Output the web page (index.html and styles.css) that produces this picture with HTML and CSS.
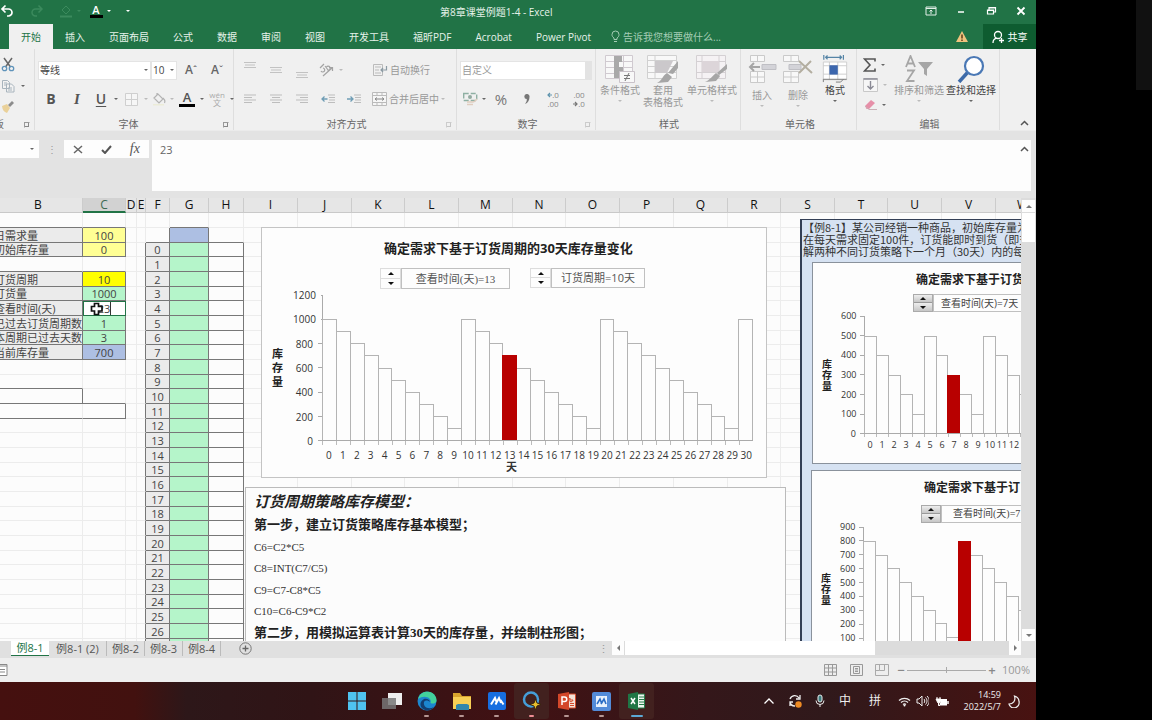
FILE: index.html
```html
<!DOCTYPE html>
<html lang="zh-CN">
<head>
<meta charset="utf-8">
<title>第8章课堂例题1-4 - Excel</title>
<link rel="stylesheet" href="styles.css">
</head>
<body>
<div class="screen">
<main class="app">
  <header class="titlebar">
    <div class="quick">
      <button class="q q-undo" aria-label="撤消"><svg width="14" height="14" viewBox="0 0 14 14"><path d="M2.500 5h6a3.500 3.500 0 0 1 0 7H7M5.500 1.500L2 5l3.500 3.500" fill="none" stroke="#fff" stroke-width="1.700"/></svg></button>
      <button class="q q-redo" aria-label="恢复"><svg width="14" height="14" viewBox="0 0 14 14"><path d="M11.500 5h-6a3.500 3.500 0 0 0 0 7H7M8.500 1.500L12 5 8.500 8.500" fill="none" stroke="#3b8a5d" stroke-width="1.500"/></svg></button>
      <button class="q q-fill" aria-label="填充颜色"><svg width="14" height="14" viewBox="0 0 14 14"><path d="M3 6l4-4 4 4-4 4z" fill="none" stroke="#3b8a5d"/><path d="M1 11.500h12v2H1z" fill="#3b8a5d"/></svg></button>
      <i class="caret dim-green"></i>
      <button class="q q-font" aria-label="字体颜色"><span class="font-a">A</span></button>
      <i class="caret white"></i>
      <button class="q q-more" aria-label="自定义快速访问工具栏"><i class="caret white"></i></button>
    </div>
    <h1>第8章课堂例题1-4 - Excel</h1>
    <div class="window-buttons">
      <button aria-label="功能区显示选项"><svg width="12" height="12" viewBox="0 0 12 12"><path d="M1 2h10v8H1zM1 3.500h10M6 9V5M4.500 6.500L6 5l1.500 1.500" fill="none" stroke="#e3f0e8"/></svg></button>
      <button aria-label="最小化"><svg width="12" height="12" viewBox="0 0 12 12"><path d="M3 7h6" stroke="#fff" stroke-width="1.500"/></svg></button>
      <button aria-label="还原"><svg width="12" height="12" viewBox="0 0 12 12"><path d="M2.500 5h6v4h-6zM4 5V2.500h6.500V7h-2M4 3h6M2.500 5.500h6" fill="none" stroke="#fff" stroke-width="1.200"/></svg></button>
      <button aria-label="关闭"><svg width="12" height="12" viewBox="0 0 12 12"><path d="M2.500 2.500l7 7M9.500 2.500l-7 7" stroke="#fff" stroke-width="1.800"/></svg></button>
    </div>
  </header>

  <nav class="tabs">
    <button class="tab active">开始</button><button class="tab">插入</button><button class="tab">页面布局</button><button class="tab">公式</button><button class="tab">数据</button><button class="tab">审阅</button><button class="tab">视图</button><button class="tab">开发工具</button><button class="tab">福昕PDF</button><button class="tab">Acrobat</button><button class="tab">Power Pivot</button>
    <button class="tell-me"><svg width="9" height="13" viewBox="0 0 9 13"><path d="M3 9.500V8C1.500 7 1 6 1 4.500a3.500 3.500 0 0 1 7 0C8 6 7.500 7 6 8v1.500zM3 11.500h3" fill="none" stroke="#a5cdb5"/></svg>告诉我您想要做什么...</button>
    <div class="tabs-right">
      <svg width="12" height="11" viewBox="0 0 12 11"><path d="M6 0l6 11H0z" fill="#efc37e"/><path d="M6 3.500v4M6 8.500V10" stroke="#5d3b17" stroke-width="1.500"/></svg>
      <button class="share"><svg width="13" height="14" viewBox="0 0 13 14"><circle cx="6" cy="5" r="3.500" fill="none" stroke="#fff" stroke-width="1.300"/><path d="M1 13c0-3 1.500-4.500 4-4.800M7 10.500h5M9.500 8v5" fill="none" stroke="#fff" stroke-width="1.300"/></svg>共享</button>
    </div>
  </nav>

  <section class="ribbon">
    <div class="group g-clip">
      <div class="clip-tools">
        <button aria-label="剪切"><svg width="14" height="15" viewBox="0 0 14 15"><path d="M3 1l6.500 9M11 1L4.500 10" stroke="#666" stroke-width="1.500"/><circle cx="3.500" cy="11.500" r="2.200" fill="none" stroke="#5f93ba" stroke-width="1.300"/><circle cx="10.500" cy="11.500" r="2.200" fill="none" stroke="#5f93ba" stroke-width="1.300"/></svg></button>
        <button aria-label="复制"><svg width="14" height="14" viewBox="0 0 14 14"><path d="M1.500 1.500h5l2 2v6h-7zM5.500 5h5l2.500 2.500V13H5.500zM3 4h3M3 6h2M7 9h4M7 11h4" fill="#f2f2f2" stroke="#a8b4bd"/></svg><i class="caret"></i></button>
        <button aria-label="格式刷"><svg width="14" height="13" viewBox="0 0 14 13"><path d="M1 6l5-2 3 4-3 5c-3-1-4.500-3-5-7z" fill="#ead19a"/><path d="M7 5l4-4 2 2-4 4z" fill="#8c8c8c"/></svg></button>
      </div>
      <div class="group-name"><span>剪贴板</span><button class="launch" aria-label="剪贴板设置"></button></div>
    </div>

    <div class="group g-font">
      <div class="row">
        <label class="combo c-font"><select aria-label="字体"><option>等线</option></select></label>
        <label class="combo c-size"><select aria-label="字号"><option>10</option></select></label>
        <button class="tool aa" aria-label="增大字号">A<sup>ˆ</sup></button>
        <button class="tool aa" aria-label="减小字号">A<sup>ˇ</sup></button>
      </div>
      <div class="row">
        <button class="tool b" aria-label="加粗">B</button>
        <button class="tool i" aria-label="倾斜">I</button>
        <button class="tool t22 u" aria-label="下划线">U</button><i class="caret"></i>
        <button class="tool t22" aria-label="边框"><svg width="13" height="13" viewBox="0 0 13 13"><path d="M.5.5h12v12H.5zM6.500.5v12M.5 6.500h12" fill="#f6f6f6" stroke="#cfcfcf"/></svg></button><i class="caret pale"></i>
        <button class="tool t18" aria-label="填充"><svg width="14" height="14" viewBox="0 0 14 14"><path d="M2 6l4-4 5 5-4 4zM5 4V1M11 6c2 2 2 4 1.500 5" fill="none" stroke="#b3b3b3" stroke-width="1.200"/><path d="M1 12h11v1.500H1z" fill="#ececd8"/></svg></button><i class="caret pale"></i>
        <button class="tool t22" aria-label="字体颜色"><span class="font-a dark">A</span></button><i class="caret"></i>
        <button class="tool t22 wen" aria-label="拼音"><span>wén</span><span>文</span></button><i class="caret"></i>
      </div>
      <div class="group-name"><span>字体</span><button class="launch" aria-label="字体设置"></button></div>
    </div>

    <div class="group g-align">
      <div class="row">
        <button class="tool up" aria-label="顶端对齐"><svg width="12" height="8" viewBox="0 0 12 8"><path d="M0 1.500h12M1 4h10M0 6.500h12" stroke="#c2c2c2"/></svg></button>
        <button class="tool" aria-label="垂直居中"><svg width="12" height="8" viewBox="0 0 12 8"><path d="M0 1.500h12M1 4h10M0 6.500h12" stroke="#c2c2c2"/></svg></button>
        <button class="tool down" aria-label="底端对齐"><svg width="12" height="8" viewBox="0 0 12 8"><path d="M0 1.500h12M1 4h10M0 6.500h12" stroke="#c2c2c2"/></svg></button>
        <button class="tool t22" aria-label="方向"><svg width="15" height="14" viewBox="0 0 15 14"><path d="M1 5l4-4M2 8a2 2 0 1 0 2-3M6 3l3 4M7.500 4a2 2 0 1 1 1 3M4 13l9-8M10 4.500h3.500V8" fill="none" stroke="#a3a3a3" stroke-width="1.200"/></svg></button><i class="caret pale"></i>
        <button class="text-tool first"><svg width="15" height="12" viewBox="0 0 15 12"><path d="M.5.5h9v11h-9zM2 3h6M2 6h4M2 9h6" fill="none" stroke="#bbb"/><path d="M13.500 2v4H8M10 4L8 6l2 2" fill="none" stroke="#8b9aa3" stroke-width="1.200"/></svg>自动换行</button>
      </div>
      <div class="row">
        <button class="tool" aria-label="左对齐"><svg width="12" height="10" viewBox="0 0 12 10"><path d="M0 1h12M0 3.500h8M0 6h12M0 8.500h8" stroke="#bdbdbd"/></svg></button>
        <button class="tool" aria-label="居中"><svg width="12" height="10" viewBox="0 0 12 10"><path d="M0 1h12M2 3.500h8M0 6h12M2 8.500h8" stroke="#bdbdbd"/></svg></button>
        <button class="tool" aria-label="右对齐"><svg width="12" height="10" viewBox="0 0 12 10"><path d="M0 1h12M4 3.500h8M0 6h12M4 8.500h8" stroke="#bdbdbd"/></svg></button>
        <button class="tool" aria-label="减少缩进"><svg width="14" height="10" viewBox="0 0 14 10"><path d="M7 1h7M8 3.500h6M8 6h6M7 8.500h7" stroke="#bdbdbd"/><path d="M6.500 5H1M3.500 2.500L1 5l2.500 2.500" fill="none" stroke="#6f9db5" stroke-width="1.300"/></svg></button>
        <button class="tool" aria-label="增加缩进"><svg width="14" height="10" viewBox="0 0 14 10"><path d="M7 1h7M8 3.500h6M8 6h6M7 8.500h7" stroke="#bdbdbd"/><path d="M0 5h6M3.500 2.500L6 5 3.500 7.500" fill="none" stroke="#6f9db5" stroke-width="1.300"/></svg></button>
        <button class="text-tool"><svg width="15" height="14" viewBox="0 0 15 14"><path d="M.5.5h14v13H.5zM.5 3.500h14M.5 10.500h14M5 .5v3M10 .5v3M5 10.500v3M10 10.500v3" fill="#f6f6f6" stroke="#bbb"/><path d="M3 7h9M5 5.500L3 7l2 1.500M10 5.500L12 7l-2 1.500" fill="none" stroke="#888"/></svg>合并后居中</button><i class="caret pale"></i>
      </div>
      <div class="group-name"><span>对齐方式</span><button class="launch pale" aria-label="对齐设置"></button></div>
    </div>

    <div class="group g-number">
      <div class="row">
        <label class="combo c-num"><select aria-label="数字格式"><option>自定义</option></select></label>
      </div>
      <div class="row">
        <button class="tool t20" aria-label="会计格式"><svg width="15" height="14" viewBox="0 0 15 14"><path d="M.7 1.500h13v7H.7z" fill="none" stroke="#8fb0a3" stroke-dasharray="5 2" stroke-width="1.400"/><circle cx="7" cy="5" r="2" fill="#93aaa0"/><path d="M4 10h6c2 0 3-2 4-3M4 12.500h6" stroke="#e0cdbf" stroke-width="1.500" fill="none"/></svg></button><i class="caret"></i>
        <button class="tool pct" aria-label="百分比">%</button>
        <button class="tool comma" aria-label="千位分隔"><svg width="6" height="10" viewBox="0 0 6 10"><path d="M3 0a2.500 2.500 0 0 1 2.500 3C5.500 6 4 9 1 10c1.500-2 2-3.500 1.700-5A2.500 2.500 0 1 1 3 0z" fill="#777"/></svg></button>
        <button class="tool dec" aria-label="增加小数位数"><span><svg width="5" height="6" viewBox="0 0 5 6"><path d="M5 3H1M3 1L1 3l2 2" fill="none" stroke="#5e93ad" stroke-width="1.200"/></svg>.0</span><span>.00</span></button>
        <button class="tool dec" aria-label="减少小数位数"><span>.00</span><span><svg width="5" height="6" viewBox="0 0 5 6"><path d="M0 3h4M2 1l2 2-2 2" fill="none" stroke="#777" stroke-width="1.200"/></svg>.0</span></button>
      </div>
      <div class="group-name"><span>数字</span><button class="launch pale" aria-label="数字设置"></button></div>
    </div>

    <div class="group g-style">
      <div class="big-row">
        <button class="big w44"><svg width="30" height="28" viewBox="0 0 30 28"><path d="M.5.5h27v23H.5zM.5 6.500h27M.5 12.500h27M.5 18.500h27M9.500.5v23M18.500.5v23" fill="#f8f8f8" stroke="#d0cad0"/><path d="M9 1h8v6h-3v5h4v5h-3v6H9z" fill="#a9a9a9"/><path d="M14.500 16.500h15v11h-15z" fill="#f8f8f8" stroke="#c9c2c9"/><path d="M19 20.500h6M19 23.500h6M24 18l-4 8" stroke="#777"/></svg><span>条件格式</span><i class="caret pale"></i></button>
        <button class="big w42"><svg width="32" height="28" viewBox="0 0 32 28"><path d="M.5.5h29v23H.5zM.5 5.500h29M.5 11.500h29M.5 17.500h29M8 .5v23" fill="#f8f8f8" stroke="#d0d0d0"/><path d="M8 6h18l-6 12H8z" fill="#cbc8cb"/><path d="M31 6v7l-5 6-5-1zM20 18l5 4-4 5-11 1c5-2 5-7 10-10z" fill="#a6a6a6"/></svg><span>套用<br>表格格式</span></button>
        <button class="big w56"><svg width="32" height="28" viewBox="0 0 32 28"><path d="M.5.5h29v23H.5zM.5 6.500h29M.5 17.500h29M6 .5v23M23 .5v23" fill="#f5f2f4" stroke="#d4d0d3"/><path d="M6 6h17v11H6z" fill="#dcd5d9"/><path d="M31 9v5l-8 6-2-2zM20 18l4 3-4 5-11 1c5-2 7-6 11-9z" fill="#a6a6a6"/></svg><span>单元格样式</span><i class="caret pale"></i></button>
      </div>
      <div class="group-name"><span>样式</span></div>
    </div>

    <div class="group g-cell">
      <div class="big-row">
        <button class="big w36 low"><svg width="29" height="28" viewBox="0 0 29 28"><path d="M2.500.5h14v6h-14zM9.500.5v6M2.500 16.500h14v11h-14zM9.500 16.500v11M2.500 22h14" fill="#f8f8f8" stroke="#cacaca"/><path d="M14 9.500h14v5H14z" fill="#d3d3d8" stroke="#bfbfc4"/><path d="M12 12H2M6 8l-4 4 4 4" fill="none" stroke="#a6a6a6" stroke-width="2"/></svg><span>插入</span><i class="caret pale"></i></button>
        <button class="big w36 low"><svg width="30" height="28" viewBox="0 0 30 28"><path d="M.5.500h15v6H.5zM8 .5v6M.5 16.500h15v11H.5zM8 16.500v11M.5 22h15" fill="#f8f8f8" stroke="#cacaca"/><path d="M6 9.500h12v5H6z" fill="#d3d3d8" stroke="#bfbfc4"/><path d="M16 6l13 12M28 6L16 18" stroke="#b3aea0" stroke-width="2"/></svg><span>删除</span><i class="caret pale"></i></button>
        <button class="big w38 on"><svg width="26" height="30" viewBox="0 0 26 30"><path d="M1 0v5M22 0v5M3 2.500h17M5 .5l-2 2 2 2M18 .5l2 2-2 2" fill="none" stroke="#5584a6" stroke-width="1.300"/><path d="M.5 7.500h25v19H.5zM7 7.500v19M16 7.500v19M.5 11.500h25M.5 20.500h25" fill="#fff" stroke="#ccc"/><path d="M7 11h9v10H7z" fill="#3c66ad"/><path d="M.5 29v-3h25M14 29h5l3-3" fill="none" stroke="#777"/></svg><span>格式</span><i class="caret"></i></button>
      </div>
      <div class="group-name"><span>单元格</span></div>
    </div>

    <div class="group g-edit">
      <div class="big-row">
        <div class="edit-small">
          <button aria-label="自动求和"><svg width="13" height="14" viewBox="0 0 13 14"><path d="M12 3.500V1H1.500l5.500 6-5.500 6H12v-2.500" fill="none" stroke="#555" stroke-width="1.600"/></svg><i class="caret"></i></button>
          <button aria-label="填充"><svg width="15" height="14" viewBox="0 0 15 14"><path d="M.5.500h14v13H.5z" fill="#f6f6f6" stroke="#c8c8c8"/><path d="M.5 1h14M7.500 3v8M4.500 8l3 3 3-3" fill="none" stroke="#8a8a95" stroke-width="1.400"/></svg><i class="caret pale"></i></button>
          <button aria-label="清除"><svg width="14" height="12" viewBox="0 0 14 12"><path d="M2 7l6-6 4 3-6 6H3.500z" fill="#e68fa8"/><path d="M2 7l4 3.500h8" fill="none" stroke="#c9b0b6"/></svg><i class="caret"></i></button>
        </div>
        <button class="big w52"><svg width="28" height="28" viewBox="0 0 28 28"><path d="M1 12L5.500 1 10 12M2.500 8.500h6M2 15.500h7L2 26h7.500" fill="none" stroke="#a6a6a6" stroke-width="1.800"/><path d="M13 7h15l-6 7v7l-3-2v-5z" fill="#a6a6a6"/></svg><span>排序和筛选</span><i class="caret pale"></i></button>
        <button class="big w52 on"><svg width="28" height="28" viewBox="0 0 28 28"><path d="M11 17L2 27" stroke="#3d6aa8" stroke-width="3.500"/><circle cx="17" cy="11" r="9" fill="#fff" stroke="#4a78b5" stroke-width="2.200"/></svg><span>查找和选择</span><i class="caret"></i></button>
      </div>
      <div class="group-name"><span>编辑</span></div>
    </div>
    <button class="collapse" aria-label="折叠功能区"><svg width="9" height="6" viewBox="0 0 9 6"><path d="M1 5l3.500-3.500L8 5" fill="none" stroke="#555" stroke-width="1.500"/></svg></button>
  </section>

  <section class="formula">
    <div class="namebox"><button aria-label="名称框"><i class="caret"></i></button></div>
    <span class="grip">⋮</span>
    <div class="fx">
      <button aria-label="取消"><svg width="10" height="9" viewBox="0 0 10 9"><path d="M1 1l8 7M9 1L1 8" stroke="#666" stroke-width="1.500"/></svg></button>
      <button aria-label="输入"><svg width="11" height="9" viewBox="0 0 11 9"><path d="M1 5l3 3 6-7" fill="none" stroke="#555" stroke-width="2"/></svg></button>
      <button class="fx-name" aria-label="插入函数">fx</button>
    </div>
    <div class="fbox"><textarea aria-label="编辑栏" rows="1">23</textarea>
      <button aria-label="折叠编辑栏"><svg width="9" height="6" viewBox="0 0 9 6"><path d="M1 5l3.500-3.500L8 5" fill="none" stroke="#555" stroke-width="1.500"/></svg></button></div>
  </section>

  <section class="sheet">
    <div class="canvas">
      <table class="grid" id="grid"></table>
      <svg class="cursor" width="14" height="14" viewBox="0 0 14 14"><path d="M4.500 1.500h4v3h3.500v4.500H8.500v3.500h-4V9H1.500V4.500h3z" fill="#fff" stroke="#111" stroke-width="1.700"/></svg>

      <article class="chart main">
        <h2>确定需求下基于订货周期的30天库存量变化</h2>
        <div class="controls">
          <span class="spin"><button class="up-arrow" aria-label="增加时间"></button><button class="down-arrow" aria-label="减少时间"></button></span><span class="linked serif">查看时间(天)=13</span>
          <span class="spin second"><button class="up-arrow" aria-label="增加周期"></button><button class="down-arrow" aria-label="减少周期"></button></span><span class="linked">订货周期=10天</span>
        </div>
        <div class="plot" data-max="1200" data-step="200" data-top="1000" data-unit="100" data-count="31" data-hit="13" data-labels="31"></div>
        <div class="x-title">天</div>
      </article>

      <article class="notes">
        <h2>订货周期策略库存模型：</h2>
        <h3>第一步，建立订货策略库存基本模型；</h3>
        <p>C6=C2*C5</p>
        <p>C8=INT(C7/C5)</p>
        <p>C9=C7-C8*C5</p>
        <p>C10=C6-C9*C2</p>
        <h3>第二步，用模拟运算表计算30天的库存量，并绘制柱形图；</h3>
      </article>

      <div class="example">
        <p>【例8-1】某公司经销一种商品，初始库存量为0<br>在每天需求固定100件，订货能即时到货（即交<br>解两种不同订货策略下一个月（30天）内的每天</p>
        <article class="chart small">
          <h2>确定需求下基于订货</h2>
          <div class="controls">
            <span class="spin raised"><button class="up-arrow" aria-label="增加时间"></button><button class="down-arrow" aria-label="减少时间"></button></span><span class="linked">查看时间(天)=7天</span>
          </div>
          <div class="plot" data-max="600" data-step="100" data-top="500" data-unit="100" data-count="14" data-hit="7" data-labels="13"></div>
        </article>
        <article class="chart small third">
          <h2>确定需求下基于订</h2>
          <div class="controls">
            <span class="spin raised"><button class="up-arrow" aria-label="增加时间"></button><button class="down-arrow" aria-label="减少时间"></button></span><span class="linked serif">查看时间(天)=7</span>
          </div>
          <div class="plot" data-max="900" data-step="100" data-top="800" data-unit="100" data-count="14" data-hit="8" data-labels="0"></div>
        </article>
      </div>
    </div>
    <div class="vscroll"><button class="up-arrow" aria-label="向上滚动"></button><span class="thumb"></span><button class="end down-arrow" aria-label="向下滚动"></button></div>
  </section>

  <footer class="sheet-tabs">
    <button class="st active">例8-1</button><button class="st wide">例8-1 (2)</button><button class="st">例8-2</button><button class="st">例8-3</button><button class="st">例8-4</button>
    <button class="add" aria-label="新工作表"><svg width="13" height="13" viewBox="0 0 13 13"><circle cx="6.500" cy="6.500" r="5.700" fill="none" stroke="#777"/><path d="M3.500 6.500h6M6.500 3.500v6" stroke="#666" stroke-width="1.300"/></svg></button>
    <span class="dots">⋮</span>
    <div class="hscroll"><button class="left-arrow" aria-label="向左滚动"></button><span class="thumb"></span><button class="end right-arrow" aria-label="向右滚动"></button></div>
  </footer>

  <section class="status">
    <svg width="8" height="12" viewBox="0 0 8 12"><path d="M-2 .5h9v11h-9" fill="#fff" stroke="#888"/><path d="M0 2h7M0 5.500h5M0 8h5" stroke="#888"/></svg>
    <div class="views">
      <button aria-label="普通"><svg width="13" height="12" viewBox="0 0 13 12"><path d="M.5.500h12v11H.5zM4.500.5v11M8.500.5v11M.5 4h12M.5 8h12" fill="none" stroke="#999"/></svg></button>
      <button aria-label="页面布局"><svg width="13" height="12" viewBox="0 0 13 12"><path d="M.5.500h12v11H.5zM3.500 2.500h6v7h-6zM5 4.500h3M5 6h3M5 7.500h3" fill="none" stroke="#999"/></svg></button>
      <button aria-label="分页预览"><svg width="14" height="12" viewBox="0 0 14 12"><path d="M.5.500h13v11H.5zM4.500.5v6h5v-6M.5 6.500h4" fill="none" stroke="#aaa"/></svg></button>
    </div>
    <span class="zoom-sign">−</span><input type="range" aria-label="缩放" min="0" max="200" value="100"><span class="zoom-sign">+</span>
    <span class="zoom-value">100%</span>
  </section>

  <nav class="taskbar">
    <div class="apps">
      <button aria-label="开始菜单"><svg width="18" height="18" viewBox="0 0 18 18"><path d="M0 0h8.500v8.500H0zM9.500 0H18v8.500H9.500zM0 9.500h8.500V18H0zM9.500 9.500H18V18H9.500z" fill="#4fc3f0"/></svg></button>
      <button aria-label="任务视图"><svg width="20" height="18" viewBox="0 0 20 18"><path d="M6 1h14v12H6z" fill="#eee"/><path d="M0 6h14v11H0z" fill="#777" opacity=".85"/></svg></button>
      <button class="run" aria-label="Edge"><svg width="20" height="20" viewBox="0 0 20 20"><circle cx="10" cy="10" r="9.500" fill="#1c86cf"/><path d="M1 8C3 1 9 0 13 1c4 1 7 5 6.500 9-1 3-4 3-6 2 2-5-6-9-12.500-4z" fill="#43d19b"/><path d="M7 11c-1 5 4 8 10 5-3 4-8 4-11 2-4-3-3-8 1-10 3-1 6 1 6 3-2-2-5-2-6 0z" fill="#123f72"/></svg></button>
      <button class="run" aria-label="文件资源管理器"><svg width="20" height="18" viewBox="0 0 20 18"><path d="M1 1h7l2 3h9v13H1z" fill="#d9a42d"/><path d="M1 5h18v12H1z" fill="#f7cf55"/><path d="M4 18v-5l2-1h9l2 1v5z" fill="#3287ac"/></svg></button>
      <button class="run" aria-label="腾讯会议"><svg width="18" height="18" viewBox="0 0 18 18"><rect width="18" height="18" rx="2" fill="#176ee0"/><path d="M3 12.500L7 6l2 5M7.500 12.500L11 6l2 5M12.500 8l3 4.500" fill="none" stroke="#fff" stroke-width="2"/></svg></button>
      <button class="run hot" aria-label="浏览器"><svg width="20" height="20" viewBox="0 0 20 20"><circle cx="9" cy="8.500" r="7" fill="none" stroke="#459ed8" stroke-width="2.500"/><path d="M13.500 8l1.500 4 4 1.500-4 1.500-1.500 4-1.500-4-4-1.500 4-1.500z" fill="#e6bd2d" stroke="#392510"/></svg></button>
      <button class="run" aria-label="PowerPoint"><svg width="18" height="18" viewBox="0 0 18 18"><path d="M9 2h8.500v14H9z" fill="#f2e1d8" stroke="#d24a2b"/><path d="M0 2l11-2v18L0 16z" fill="#d4472a"/><path d="M4 13V5h2.500a2 2 0 0 1 0 4.500H4" fill="none" stroke="#fff" stroke-width="1.500"/><path d="M12 6a2 2 0 1 0 3 2h-3zM12 11.500h4M12 13.500h4" stroke="#d24a2b" fill="none"/></svg></button>
      <button class="run" aria-label="会议"><svg width="19" height="19" viewBox="0 0 19 19"><rect width="19" height="19" rx="2" fill="#538bd8"/><rect x="4" y="4" width="11" height="11" fill="#e8f1fc"/><path d="M5 12l3-5 1.500 4M9 12l3-5 2 5" fill="none" stroke="#296cc5" stroke-width="1.600"/></svg></button>
      <button class="run current" aria-label="Excel"><svg width="17" height="18" viewBox="0 0 17 18"><path d="M8 2h8.500v14H8z" fill="#edf6ef" stroke="#267c49"/><path d="M11 5h5M11 7.500h5M11 10h5M11 12.500h5" stroke="#267c49"/><path d="M0 2l10-2v18L0 16z" fill="#1f7645"/><path d="M3 6l4 6M7 6l-4 6" stroke="#fff" stroke-width="1.500"/></svg></button>
    </div>
    <div class="tray">
      <svg class="t1" width="12" height="8" viewBox="0 0 12 8"><path d="M1.500 6.500L6 2l4.500 4.500" fill="none" stroke="#fff" stroke-width="1.300"/></svg>
      <svg class="t2" width="14" height="14" viewBox="0 0 14 14"><path d="M2 5a5 5 0 0 1 9-1M12 1v4H8M7 12a5 5 0 0 1-5-4M2 12V8h3" fill="none" stroke="#eee" stroke-width="1.300"/><circle cx="10.500" cy="10.500" r="3.200" fill="#ee8b24"/></svg>
      <svg class="t3" width="10" height="14" viewBox="0 0 10 14"><rect x="3" y="1" width="4" height="7" rx="2" fill="#3d7d80" stroke="#e7eeee"/><path d="M1 6.500a4 4 0 0 0 8 0M5 10.500V13" fill="none" stroke="#eee"/></svg>
      <span class="t4">中</span><span class="t5">拼</span>
      <svg class="t6" width="13" height="11" viewBox="0 0 13 11"><path d="M1 4.500a8 8 0 0 1 11 0M3 6.500a5 5 0 0 1 7 0M5 8.500a2.500 2.500 0 0 1 3 0" fill="none" stroke="#eee" stroke-width="1.300"/><circle cx="6.500" cy="9.500" r="1" fill="#fff"/></svg>
      <svg class="t7" width="13" height="12" viewBox="0 0 13 12"><path d="M1 4h2l3-3v10L3 8H1zM8 4c1 1 1 3 0 4M9.500 2.500c2 2 2 5 0 7M11 1c3 3 3 7 0 10" fill="none" stroke="#eee"/></svg>
      <svg class="t8" width="14" height="11" viewBox="0 0 14 11"><path d="M2 1v2M5 1v2M1 3h5v2a2 2 0 0 1-4 0zM3.500 7v2.500H5" stroke="#fff" fill="#fff"/><path d="M6 3h6v6.500H5V7h1z" fill="#fff"/><path d="M13 5v3" stroke="#fff" stroke-width="1.500"/></svg>
      <div class="clock"><time>14:59</time><time>2022/5/7</time></div>
      <svg class="t9" width="12" height="13" viewBox="0 0 12 13"><path d="M6.500 1c3 1 4.500 3 4.500 5.500a5 5 0 0 1-10 2.500c4 0 7-3 5.500-8z" fill="none" stroke="#eee" stroke-width="1.200"/></svg>
    </div>
  </nav>
</main>
<aside class="side"><div class="side-tile"></div></aside>
</div>
<script src="sheet.js"></script>
</body>
</html>
```

FILE: styles.css
```css
* { box-sizing: border-box; }
body { margin: 0; background: #000; color: #444; font: 10px/14px "Open Sans", "Noto Sans CJK SC", sans-serif; }
button, select, textarea, input { font: inherit; color: inherit; margin: 0; padding: 0; border: 0; background: none; border-radius: 0; }
button { display: inline-flex; align-items: center; justify-content: center; white-space: nowrap; }
svg { display: block; flex: none; }
h1, h2, h3, p { margin: 0; font-weight: normal; }
.screen { display: grid; grid-template-columns: minmax(0, 1fr) 116px; height: 100vh; overflow: hidden; }
.app { display: flex; flex-direction: column; min-width: 0; min-height: 0; background: #e4e4e4; }
.side { background: #000; }
.side-tile { width: 16px; height: 90px; margin-left: auto; background: #111; }

.caret { flex: none; display: inline-flex; width: 8px; justify-content: center; }
.caret::after { content: ""; border: 2px solid transparent; border-top-color: #666; border-bottom: 0; }
.caret.pale::after { border-top-color: #bbb; }
.caret.white::after { border-top-color: #fff; }
.caret.dim-green::after { border-top-color: #3b8a5d; }
.up-arrow::after, .down-arrow::after, .left-arrow::after, .right-arrow::after { content: ""; border: 3px solid transparent; }
.up-arrow::after { border-bottom-color: currentColor; border-top: 0; }
.down-arrow::after { border-top-color: currentColor; border-bottom: 0; }
.left-arrow::after { border-right-color: currentColor; border-left: 0; }
.right-arrow::after { border-left-color: currentColor; border-right: 0; }

/* title bar and ribbon tabs */
.titlebar { display: flex; height: 24px; background: #217346; color: #e6f2ea; }
.quick { display: flex; align-items: center; width: 440px; height: 22px; }
.q { height: 20px; }
.q-undo { width: 14px; }
.q-redo { width: 14px; margin-left: 16px; }
.q-fill { width: 14px; margin-left: 15px; }
.quick .dim-green { margin-left: 2px; }
.q-font { width: 14px; margin-left: 6px; }
.quick > .white { margin-left: 2px; }
.q-more { margin-left: 11px; }
.font-a { width: 13px; height: 13px; border-bottom: 3px solid #000; font-weight: 600; font-size: 11px; line-height: 10px; text-align: center; color: #fff; }
.font-a.dark { width: 16px; height: 16px; color: #555; font-size: 13px; line-height: 12px; }
.titlebar h1 { flex: 1; font-size: 10px; line-height: 24px; white-space: nowrap; }
.window-buttons { display: flex; height: 22px; }
.window-buttons button { width: 30px; }
.tabs { display: flex; height: 25px; background: #217346; color: #e6f2ea; padding-left: 9px; }
.tab { padding: 0 12px; }
.tab.active { background: #f0f0f0; color: #217346; }
.tell-me { gap: 3px; margin-left: 8px; color: #a5cdb5; }
.tabs-right { display: flex; align-items: center; gap: 15px; margin-left: auto; }
.share { height: 25px; width: 53px; gap: 3px; background: #0e5c30; color: #fff; }

/* ribbon */
.ribbon { display: flex; height: 82px; background: #f0f0f0; border-bottom: 1px solid #ebebeb; }
.group { display: flex; flex-direction: column; flex: none; padding: 8px 0 0 3px; border-right: 1px solid #dedede; }
.g-clip { width: 35px; padding: 5px 0 0; }
.g-font { width: 199px; }
.g-align { width: 223px; }
.g-number { width: 139px; }
.g-style { width: 145px; padding: 6px 0 0 2px; }
.g-cell { width: 116px; padding: 6px 0 0 3px; }
.g-edit { width: 143px; padding: 6px 0 0 3px; }
.row { display: flex; align-items: center; height: 26px; margin-bottom: 3px; }
.group-name { display: flex; justify-content: center; align-items: center; position: relative; height: 14px; margin-top: auto; margin-bottom: -1px; color: #666; }
.g-font .group-name { padding-right: 14px; }
.g-clip .group-name { justify-content: flex-start; }
.g-clip .group-name span { width: 4px; direction: rtl; overflow: hidden; white-space: nowrap; }
.launch { position: absolute; right: 4px; bottom: 3px; width: 6px; height: 6px; border: 1px solid #999; border-right-color: transparent; border-bottom-color: transparent; }
.launch::after { content: ""; width: 3px; height: 3px; border: 1px solid #888; border-left: 0; border-top: 0; }
.launch.pale { opacity: .4; }
.clip-tools { display: flex; flex-direction: column; }
.clip-tools button { height: 21px; gap: 4px; justify-content: flex-start; margin-left: 1px; }
.combo { display: flex; align-items: center; height: 19px; background: #fff; position: relative; border: 1px solid #e4e4e4; }
.combo select { appearance: none; width: 100%; height: 17px; padding-left: 1px; line-height: 17px; }
.combo::after { content: ""; position: absolute; right: 2px; border: 2px solid transparent; border-top-color: #666; border-bottom: 0; }
.c-font { width: 113px; }
.c-size { width: 26px; margin-right: 1px; }
.c-num { width: 132px; border-right: 7px solid #e3e3e3; color: #999; }
.combo.c-num::after { display: none; }
.tool { flex: none; width: 26px; height: 24px; }
.t22 { width: 22px; }
.t20 { width: 20px; }
.t18 { width: 18px; }
.tool.up { align-items: flex-start; padding-top: 3px; }
.tool.down { align-items: flex-end; padding-bottom: 3px; }
.aa { font-size: 12px; font-weight: 600; color: #666; }
.aa sup { font-size: 9px; line-height: 6px; }
.b, .i, .u { font-size: 14px; font-weight: 700; color: #555; }
.i { font-family: "Liberation Serif", serif; font-style: italic; font-size: 15px; }
.u { text-decoration: underline; font-weight: 600; text-underline-offset: 2px; }
.wen { flex-direction: column; color: #aaa; font-size: 8px; line-height: 8px; }
.text-tool { color: #999; gap: 2px; margin-left: 5px; }
.text-tool.first { margin-left: 28px; }
.pct { font-size: 15px; color: #777; }
.dec { flex-direction: column; align-items: center; font-size: 8px; line-height: 9px; color: #888; }
.dec span { display: flex; align-items: center; }
.big-row { display: flex; align-items: flex-start; }
.big { flex-direction: column; color: #999; line-height: 12px; gap: 1px; }
.big svg { height: 28px; }
.big.low span { margin-top: 5px; }
.big.on { color: #444; }
.w36 { width: 36px; }
.w38 { width: 38px; }
.w42 { width: 42px; }
.w44 { width: 44px; }
.w52 { width: 52px; }
.w56 { width: 56px; }
.big .caret { height: 8px; align-items: center; }
.edit-small { display: flex; flex-direction: column; width: 33px; }
.edit-small button { height: 20px; justify-content: flex-start; gap: 3px; padding-left: 3px; }
.collapse { align-self: flex-end; margin-left: auto; width: 24px; height: 14px; }

/* formula bar */
.formula { display: flex; align-items: flex-start; padding: 9px 5px 7px 0; background: #e3e3e3; }
.namebox { display: flex; justify-content: flex-end; width: 39px; height: 18px; background: #fdfdfd; }
.namebox button { width: 14px; }
.grip { width: 25px; text-align: center; color: #999; line-height: 18px; }
.fx { display: flex; width: 85px; height: 18px; background: #fdfdfd; }
.fx button { flex: 1; }
.fx .fx-name { font: italic 14px/16px "Liberation Serif", serif; color: #555; }
.fbox { display: flex; flex: 1; align-items: flex-start; height: 51px; margin-left: 3px; background: #fdfdfd; }
.fbox textarea { flex: 1; height: 50px; padding: 1px 8px; resize: none; font-size: 11px; line-height: 17px; color: #666; outline: 0; }
.fbox button { width: 13px; height: 18px; }

/* worksheet */
.sheet { display: grid; grid-template-columns: minmax(0, 1fr) 15px; flex: 1; min-height: 0; }
.canvas { position: relative; overflow: hidden; background: #fcfcfc; }
.grid { table-layout: fixed; width: 1056px; margin-left: -6px; border-collapse: separate; border-spacing: 0; font: 11px/13px "Open Sans", "Noto Sans CJK SC", sans-serif; color: #444; }
.grid th, .grid td { height: 15px; padding: 0; border-right: 1px solid #ececec; border-bottom: 1px solid #ececec; text-align: center; white-space: nowrap; overflow: hidden; }
.grid tr:nth-child(3n) td { height: 14px; line-height: 12px; }
.grid th { height: 15px; background: #e6e6e6; border-right-color: #ccc; border-bottom-color: #c9c9c9; font-weight: 400; font-size: 12px; line-height: 14px; color: #111; }
.grid th.sel { background: #d2d2d2; border-bottom: 2px solid #217346; line-height: 13px; color: #3d6a52; }
.grid .name { background: #ebebeb; text-align: left; }
.grid .name, .grid .box { border-right-color: #777; border-bottom-color: #777; }
.grid .edge-r { border-right-color: #777; }
.grid .edge-b { border-bottom-color: #777; }
.grid .pale-yellow { background: #ffff94; }
.grid .yellow { background: #ff0; }
.grid .green { background: #b5f5ca; }
.grid .blue { background: #adbfe3; }
.grid .index { background: #ebebeb; }
.grid td.editing { background: #fff; border: 1px solid #217346; }
.caret-line { border-right: 1px solid #333; }
.cursor { position: absolute; left: 90px; top: 104px; }

/* drawing objects placed on the sheet */
.chart { background: #fdfdfd; border: 1px solid #c4c4c4; color: #333; }
.chart h2 { font-weight: 700; color: #222; white-space: nowrap; line-height: 16px; }
.controls { display: flex; white-space: nowrap; }
.spin { display: grid; grid-template-rows: 1fr 1fr; width: 21px; border: 1px solid #ddd; }
.spin button { min-height: 0; color: #111; border-bottom: 1px solid #ddd; }
.spin button:last-child { border-bottom: 0; }
.spin.raised { border-color: #aaa; }
.spin.raised button { background: linear-gradient(#eee, #c6c6c6); border-color: #999; }
.linked { display: grid; place-items: center; border: 1px solid #c0c0c0; font-size: 11px; line-height: 14px; color: #555; }
.serif { font-family: "Liberation Serif", "Noto Sans CJK SC", serif; }
.plot { display: grid; grid-template-columns: 31px 29px minmax(0, 1fr); grid-template-rows: 146px auto; }
.y-title { display: flex; flex-direction: column; align-self: center; justify-self: center; font-size: 11px; font-weight: 700; line-height: 14px; color: #222; }
.y-labels { display: flex; flex-direction: column; justify-content: space-between; margin: -6px 0; line-height: 12px; }
.y-labels span { display: flex; align-items: center; justify-content: flex-end; gap: 5px; height: 12px; }
.y-labels span::after { content: ""; width: 4px; height: 1px; background: #aaa; }
.bars { display: flex; align-items: flex-end; border-left: 1px solid #aaa; border-bottom: 1px solid #aaa; }
.bars i { flex: 1; margin: 0 0 0 -1px; border: 1px solid #b4b4b4; border-bottom: 0; }
.bars .hit { position: relative; background: #b80000; border-color: #b80000; }
.x-labels { grid-column: 3; display: flex; line-height: 12px; }
.x-labels span { flex: 1 1 0; min-width: 0; display: flex; flex-direction: column; align-items: center; white-space: nowrap; }
.x-labels span::before { content: ""; align-self: stretch; height: 4px; margin-bottom: 4px; border-left: 1px solid #bbb; }
.main { position: absolute; left: 261px; top: 29px; width: 506px; height: 251px; padding: 12px 13px 0 0; }
.main h2 { font-size: 13px; padding-left: 122px; }
.main .controls { height: 21px; margin: 12px 0 6px; padding-left: 118px; }
.main .linked { width: 109px; }
.main .linked:last-child { width: 94px; height: 20px; }
.main .second { margin-left: 20px; height: 20px; }
.x-title { padding-left: 8px; text-align: center; font-size: 11px; font-weight: 700; line-height: 12px; }
.notes { position: absolute; left: 245px; top: 289px; width: 541px; height: 200px; padding: 5px 8px; background: #fcfcfc; border: 1px solid #bbb; color: #222; white-space: nowrap; font-family: "Liberation Serif", "Noto Sans CJK SC", serif; }
.notes h2 { font-size: 15px; line-height: 18px; font-weight: 700; font-style: italic; padding-bottom: 3px; }
.notes h3 { font-size: 13px; line-height: 22px; font-weight: 700; }
.notes p { font-size: 11px; line-height: 22px; color: #333; margin-bottom: -1px; }
.notes p:nth-of-type(2n) { margin-bottom: 0; }
.example { position: absolute; left: 800px; top: 21px; right: -14px; bottom: -24px; padding-left: 10px; background: #d6e2f2; border: 1px solid #333f55; border-left-width: 2px; overflow: hidden; }
.example p { margin-left: -9px; font-family: "Noto Sans CJK SC", sans-serif; font-size: 11px; line-height: 12px; height: 37px; color: #333; white-space: nowrap; padding-top: 1px; }
.small { height: 202px; margin-top: 5px; padding-top: 9px; border-color: #8a929c; white-space: nowrap; font-size: 9px; }
.small h2 { font-size: 12px; padding-left: 103px; }
.small .controls { height: 18px; margin: 6px 0 4px; padding-left: 100px; }
.small .spin { width: 20px; }
.small .linked { flex: 1; justify-content: start; padding-left: 7px; font-size: 10px; color: #444; }
.small .plot { grid-template-columns: 28px 23px 168px; grid-template-rows: 118px auto; }
.small .y-title { font-size: 10px; line-height: 11px; }
.small .y-labels span { gap: 4px; }
.small .x-labels span::before { height: 3px; margin-bottom: 2px; }
.third { margin-top: 6px; margin-left: -1px; }
.third h2 { padding-left: 112px; }
.third .controls { margin: 9px 0 4px; padding-left: 109px; }
.third .linked { padding-left: 11px; }
.third .plot { grid-template-rows: 125px auto; }
.vscroll { display: flex; flex-direction: column; background: #dcdcdc; padding: 2px 1px 0; }
.vscroll button, .hscroll button { background: #fdfdfd; color: #777; }
.vscroll button { height: 12px; }
.vscroll .thumb { height: 29px; margin-top: 1px; background: #fff; }
.end { margin-left: auto; }
.vscroll .end { margin: auto 0 0; }

/* sheet tabs and status bar */
.sheet-tabs { display: flex; height: 17px; padding-left: 11px; background: #e0e0e0; font-size: 11px; color: #555; }
.st { width: 38px; height: 15px; border-right: 1px solid #bbb; line-height: 14px; }
.st.wide { width: 58px; }
.st.active { background: #fff; color: #217346; border-right: 0; border-bottom: 1px solid #217346; }
.add { width: 48px; height: 15px; }
.dots { margin-left: auto; width: 18px; text-align: center; line-height: 15px; color: #999; }
.hscroll { display: flex; width: 409px; height: 14px; margin-right: 15px; background: #dcdcdc; }
.hscroll button { width: 12px; }
.hscroll .end { margin-left: auto; }
.hscroll .thumb { width: 250px; margin-left: 1px; background: #fff; }
.status { display: flex; align-items: center; height: 24px; padding-right: 6px; background: #eee; color: #999; }
.views { display: flex; margin-left: auto; }
.views button { width: 26px; height: 20px; }
.zoom-sign { width: 12px; font-size: 13px; text-align: center; color: #888; font-weight: 600; }
.status input { width: 79px; height: 9px; appearance: none; background: linear-gradient(#aaa, #aaa) center / 100% 1px no-repeat; }
.status input::-webkit-slider-thumb { appearance: none; width: 1px; height: 6px; background: #aaa; }
.zoom-value { width: 32px; text-align: right; font-size: 11px; }

/* desktop taskbar */
.taskbar { display: flex; height: 38px; background: linear-gradient(90deg, #45100f 0, #42110f 13%, #2d1719 18%, #301416 30%, #411113 50%, #34171a 68%, #30191b 80%, #481211 100%); color: #eee; }
.apps { display: flex; padding-left: 339px; }
.apps button { position: relative; width: 35px; height: 36px; margin-top: 1px; }
.apps .hot, .apps .current { background: #42211f; border-radius: 3px; }
.run::after { content: ""; position: absolute; bottom: 2px; width: 5px; height: 2px; border-radius: 1px; background: #b69693; }
.current::after { width: 12px; background: #5ca9d5; }
.hot::after { background: #ed8d94; }
.tray { display: flex; align-items: center; margin-left: auto; padding-right: 16px; }
.t2 { margin-left: 13px; }
.t3 { margin-left: 13px; }
.t4 { margin-left: 14px; font-size: 12px; }
.t5 { margin-left: 18px; font-size: 12px; }
.t6 { margin-left: 17px; }
.t7 { margin-left: 5px; }
.t8 { margin-left: 6px; }
.clock { display: flex; flex-direction: column; align-items: flex-end; width: 52px; line-height: 12px; font-size: 9px; }
.t9 { margin-left: 7px; }
```

FILE: sheet.js
```js
const columns = [["B", 89], ["C", 43], ["D", 11], ["E", 9], ["F", 24], ["G", 39], ["H", 35], ["I", 54], ["J", 54], ["K", 53], ["L", 54], ["M", 54], ["N", 53], ["O", 54], ["P", 54], ["Q", 54], ["R", 53], ["S", 54], ["T", 53], ["U", 54], ["V", 54], ["W", 54]];
const inputs = {
  2: ["日需求量", "100", "pale-yellow"],
  3: ["初始库存量", "0", "pale-yellow"],
  5: ["订货周期", "10", "yellow"],
  6: ["订货量", "1000", "green"],
  7: ["查看时间(天)", "23", "editing"],
  8: ["已过去订货周期数", "1", "green"],
  9: ["本周期已过去天数", "3", "green"],
  10: ["当前库存量", "700", "blue"]
};
const lastRow = 30;

function cell(row, col) {
  const data = inputs[row];
  const classes = [];
  let text = "";
  if (col === "B" && data) { classes.push("name"); text = data[0]; }
  if (col === "C" && data) { classes.push("box", data[2]); text = data[1]; }
  if ((col === "B" || col === "C") && (row === 1 || row === 4)) classes.push("edge-b");
  if (col === "B" && (row === 12 || row === 13 || row === 14)) classes.push("edge-b");
  if (col === "B" && row === 13) classes.push("edge-r");
  if (col === "C" && (row === 13 || row === 14)) classes.push("edge-b");
  if (col === "C" && row === 14) classes.push("edge-r");
  if (col === "G" && row === 1) classes.push("edge-b");
  if (col === "F" && row === 2) classes.push("edge-b", "edge-r");
  if (col === "G" && row === 2) classes.push("box", "blue");
  if (col === "H" && row === 2) classes.push("edge-b");
  if (row >= 3) {
    if (col === "E") classes.push("edge-r");
    if (col === "F") { classes.push("box", "index"); text = row < lastRow ? String(row - 3) : ""; }
    if (col === "G") classes.push("box", "green");
    if (col === "H") classes.push("box");
  }
  if (row === 7 && col === "C") text = '<span class="caret-line">23</span>';
  return `<td class="${classes.join(" ")}">${text}</td>`;
}

let html = "<colgroup>" + columns.map(c => `<col style="width:${c[1]}px">`).join("") + "</colgroup><thead><tr>";
html += columns.map(c => `<th${c[0] === "C" ? ' class="sel"' : ""}>${c[0]}</th>`).join("") + "</tr></thead><tbody>";
for (let row = 1; row <= lastRow; row++) html += "<tr>" + columns.map(c => cell(row, c[0])).join("") + "</tr>";
document.getElementById("grid").innerHTML = html + "</tbody>";

document.querySelectorAll(".plot").forEach(plot => {
  const { max, step, top, unit, count, hit, labels } = Object.fromEntries(Object.entries(plot.dataset).map(([k, v]) => [k, Number(v)]));
  const period = top / unit;
  let ticks = "", bars = "", days = "";
  for (let v = max; v >= 0; v -= step) ticks += `<span>${v > 0 || labels > 0 ? v : ""}</span>`;
  for (let day = 0; day < count; day++) {
    const stock = top - (day % period) * unit;
    bars += `<i${day === hit ? ' class="hit"' : ""} style="height:${stock / max * 100}%"></i>`;
    days += `<span>${day < labels ? day : ""}</span>`;
  }
  plot.innerHTML = `<div class="y-title"><span>库</span><span>存</span><span>量</span></div><div class="y-labels">${ticks}</div><div class="bars">${bars}</div><div class="x-labels">${days}</div>`;
});
```
